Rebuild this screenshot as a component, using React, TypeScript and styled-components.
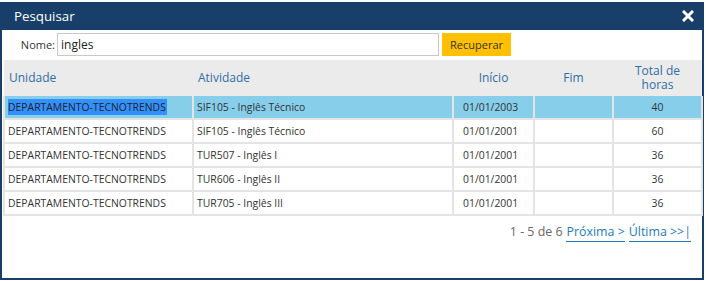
import * as React from "react";
import styled, { createGlobalStyle } from "styled-components";

const GlobalStyle = createGlobalStyle`
  html, body {
    margin: 0;
    padding: 0;
    background: #ffffff;
  }
  body {
    font-family: "Open Sans", "Noto Sans", Arial, sans-serif;
    color: #333;
  }
`;

const Dialog = styled.div`
  box-sizing: border-box;
  width: 704px;
  height: 278px;
  margin-top: 2px;
  border: 2px solid #173f69;
  border-top: none;
  background: #fff;
  display: flex;
  flex-direction: column;
`;

const TitleBar = styled.div`
  height: 28px;
  margin: 0 -2px;
  padding: 0 10px 0 14px;
  background: #173f69;
  color: #fff;
  display: flex;
  align-items: center;
  justify-content: space-between;
  font-size: 13.3px;
`;

const CloseButton = styled.button`
  border: none;
  background: none;
  padding: 0;
  width: 12px;
  height: 12px;
  display: flex;
  cursor: pointer;
`;

const SearchRow = styled.div`
  display: flex;
  align-items: center;
  height: 23px;
  margin-top: 3px;
`;

const Label = styled.label`
  width: 53px;
  padding-right: 2px;
  text-align: right;
  font-size: 11px;
  color: #333;
`;

const SearchInput = styled.input`
  box-sizing: border-box;
  width: 382px;
  height: 23px;
  border: 1px solid #c8c8c8;
  padding: 0 3px;
  font-family: inherit;
  font-size: 12px;
  color: #222;
  outline: none;
`;

const Button = styled.button`
  margin-left: 3px;
  width: 69px;
  height: 23px;
  border: none;
  background: #ffc000;
  color: #333;
  font-family: inherit;
  font-size: 11px;
  padding: 0;
`;

const Table = styled.table`
  margin: 4px 0 0 1px;
  width: 698px;
  border-collapse: collapse;
  table-layout: fixed;
  font-size: 10.4px;
`;

const HeadCell = styled.th<{ $align?: string }>`
  height: 36px;
  padding: 0 ${(p) => (p.$align === "left" ? "5px" : "0")};
  background: #ebebeb;
  color: #2f6ea5;
  font-weight: normal;
  font-size: 12px;
  line-height: 14px;
  text-align: ${(p) => p.$align || "center"};
`;

const Row = styled.tr<{ $selected?: boolean }>`
  background: ${(p) => (p.$selected ? "#87ceeb" : "#fff")};
`;

const Cell = styled.td<{ $align?: string }>`
  height: 22px;
  padding: 0 3px;
  border: 2px solid #e4e4e4;
  border-top: none;
  text-align: ${(p) => p.$align || "left"};
  color: #333;
  white-space: nowrap;
  overflow: hidden;
`;

const DateCell = styled(Cell)`
  padding-left: 9px;
`;

const Selection = styled.span`
  background: #3390ff;
  color: #222;
  padding: 1px 1px 1px 0;
`;

const Pager = styled.div`
  display: flex;
  justify-content: flex-end;
  align-items: baseline;
  gap: 4px;
  padding: 7px 11px 0 0;
  font-size: 12.4px;
  color: #666;
`;

const PageLink = styled.a`
  color: #1a7bbf;
  text-decoration: none;
  border-bottom: 1px solid #1a7bbf;
  padding-bottom: 1px;
`;

const columns = [189, 260, 81, 79, 89];

const rows = [
  { unit: "DEPARTAMENTO-TECNOTRENDS", act: "SIF105 - Inglês Técnico", start: "01/01/2003", hours: "40" },
  { unit: "DEPARTAMENTO-TECNOTRENDS", act: "SIF105 - Inglês Técnico", start: "01/01/2001", hours: "60" },
  { unit: "DEPARTAMENTO-TECNOTRENDS", act: "TUR507 - Inglês I", start: "01/01/2001", hours: "36" },
  { unit: "DEPARTAMENTO-TECNOTRENDS", act: "TUR606 - Inglês II", start: "01/01/2001", hours: "36" },
  { unit: "DEPARTAMENTO-TECNOTRENDS", act: "TUR705 - Inglês III", start: "01/01/2001", hours: "36" },
];

export default function App() {
  return (
    <>
      <GlobalStyle />
      <Dialog>
        <TitleBar>
          <span>Pesquisar</span>
          <CloseButton aria-label="Fechar">
            <svg width="12" height="12" viewBox="0 0 12 12">
              <path d="M2 2 L10 10 M10 2 L2 10" stroke="#fff" strokeWidth="3" strokeLinecap="square" />
            </svg>
          </CloseButton>
        </TitleBar>
        <SearchRow>
          <Label>Nome:</Label>
          <SearchInput defaultValue="ingles" />
          <Button>Recuperar</Button>
        </SearchRow>
        <Table>
          <colgroup>
            {columns.map((w, i) => (
              <col key={i} style={{ width: w }} />
            ))}
          </colgroup>
          <thead>
            <tr>
              <HeadCell $align="left">Unidade</HeadCell>
              <HeadCell $align="left">Atividade</HeadCell>
              <HeadCell>Início</HeadCell>
              <HeadCell>Fim</HeadCell>
              <HeadCell>Total de<br />horas</HeadCell>
            </tr>
          </thead>
          <tbody>
            {rows.map((r, i) => (
              <Row key={i} $selected={i === 0}>
                <Cell>{i === 0 ? <Selection>{r.unit}</Selection> : r.unit}</Cell>
                <Cell>{r.act}</Cell>
                <DateCell>{r.start}</DateCell>
                <Cell />
                <Cell $align="center">{r.hours}</Cell>
              </Row>
            ))}
          </tbody>
        </Table>
        <Pager>
          <span>1 - 5 de 6</span>
          <PageLink href="#">Próxima &gt;</PageLink>
          <PageLink href="#">Última &gt;&gt;|</PageLink>
        </Pager>
      </Dialog>
    </>
  );
}
